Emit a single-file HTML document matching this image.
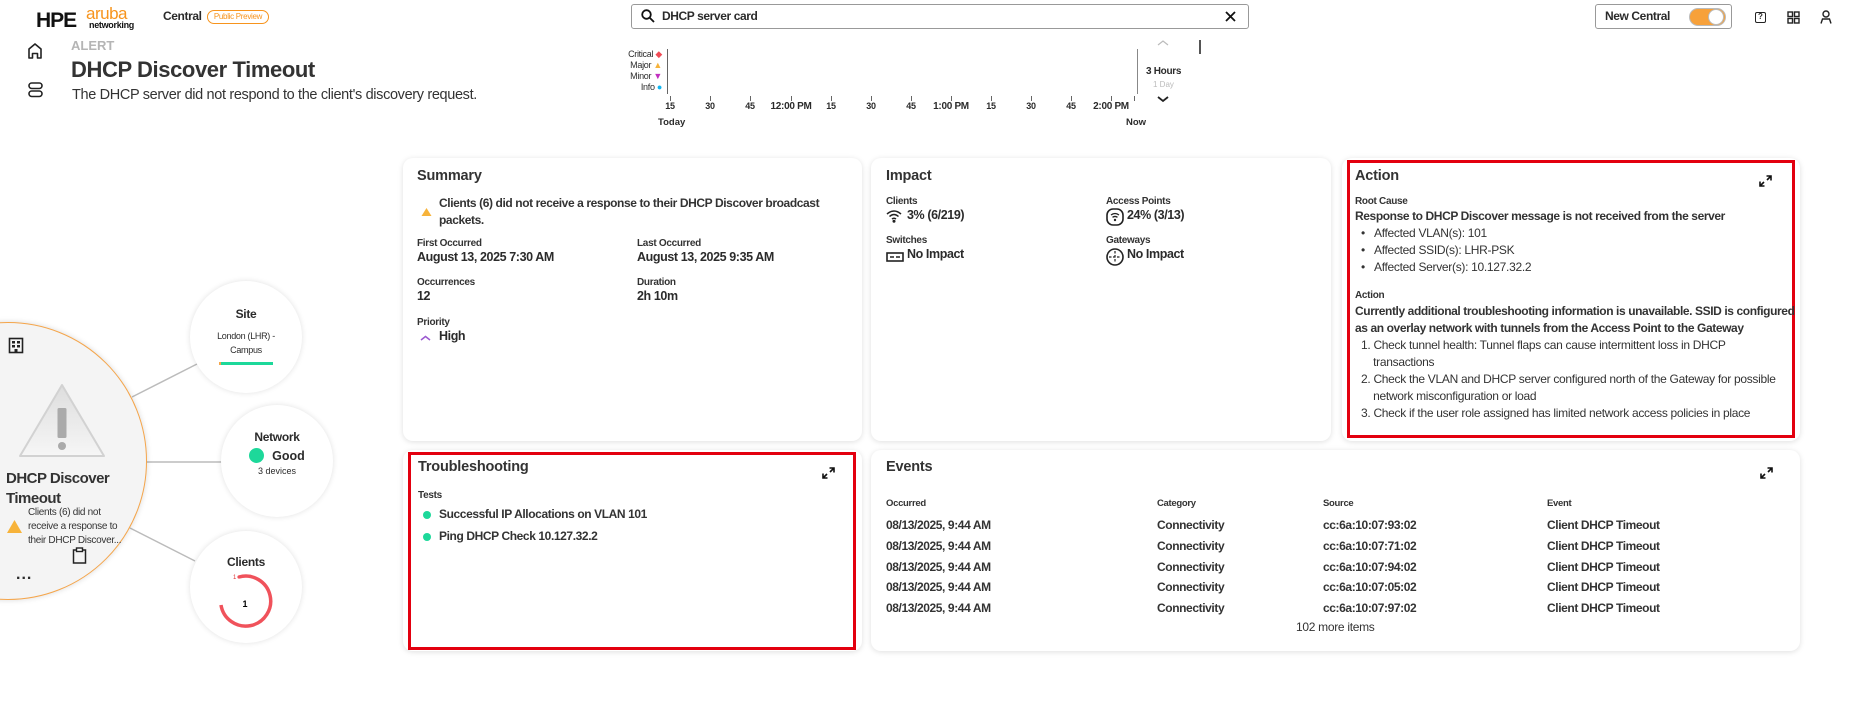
<!DOCTYPE html>
<html><head><meta charset="utf-8"><style>
*{box-sizing:border-box;margin:0;padding:0}
body{width:1868px;height:714px;background:#fff;font-family:"Liberation Sans",sans-serif;color:#2b2b2b;position:relative;overflow:hidden}
.a{position:absolute;white-space:nowrap}
.card{position:absolute;background:#fff;border-radius:10px;box-shadow:0 1px 6px rgba(0,0,0,.13)}
.red{position:absolute;border:3px solid #e3000f}
.ttl{position:absolute;font-weight:bold;font-size:14.5px;color:#333;letter-spacing:-0.2px}
.lbl{font-size:10px;color:#333;font-weight:bold;letter-spacing:-0.3px}
.val{font-size:12.5px;font-weight:bold;color:#2b2b2b;letter-spacing:-0.4px}
.t{font-size:12px;font-weight:bold;color:#333;letter-spacing:-0.4px}
.n{font-size:12px;color:#333;letter-spacing:-0.3px}
.circ{position:absolute;border-radius:50%;background:#fff;box-shadow:0 0 6px rgba(0,0,0,.12);text-align:center}
.tick{position:absolute;width:1px;height:5px;background:#666;top:96px}
.tl{position:absolute;top:101px;font-size:9px;font-weight:bold;transform:translateX(-50%);letter-spacing:-0.3px}
</style></head><body>
<!-- header -->
<div class="a" style="left:36px;top:9px;font-weight:900;font-size:21px;letter-spacing:-1px;color:#111">HPE</div>
<div class="a" style="left:86px;top:4px;font-size:17px;color:#f7941d;letter-spacing:-0.5px">aruba</div>
<div class="a" style="left:89px;top:20px;font-size:9px;color:#111;font-weight:bold;letter-spacing:-0.3px">networking</div>
<div class="a" style="left:163px;top:9px;font-size:12px;font-weight:bold;letter-spacing:-0.4px">Central</div>
<div class="a" style="left:207px;top:10px;width:62px;height:14px;border:1px solid #f7941d;border-radius:8px;font-size:8px;color:#f7941d;text-align:center;line-height:12px;letter-spacing:-0.3px">Public Preview</div>

<div class="a" style="left:631px;top:4px;width:618px;height:25px;border:1px solid #999;border-radius:3px"></div>
<svg class="a" style="left:641px;top:9px" width="14" height="14" viewBox="0 0 14 14"><circle cx="5.5" cy="5.5" r="4.3" fill="none" stroke="#111" stroke-width="1.8"/><path d="M8.7 8.7L13 13" stroke="#111" stroke-width="1.8"/></svg>
<div class="a" style="left:662px;top:9px;font-size:12px;font-weight:bold;letter-spacing:-0.4px">DHCP server card</div>
<svg class="a" style="left:1225px;top:11px" width="11" height="11"><path d="M1 1L10 10M10 1L1 10" stroke="#111" stroke-width="1.8"/></svg>

<div class="a" style="left:1595px;top:4px;width:137px;height:25px;border:1px solid #999;border-radius:3px"></div>
<div class="a" style="left:1605px;top:9px;font-size:12px;font-weight:bold;letter-spacing:-0.4px">New Central</div>
<div class="a" style="left:1689px;top:8px;width:37px;height:18px;border-radius:9px;background:#f7a13a;border:1px solid #bbb"></div>
<div class="a" style="left:1708px;top:9px;width:16px;height:16px;border-radius:50%;background:#fff;border:1px solid #bbb"></div>
<div class="a" style="left:1755px;top:12px;width:11px;height:11px;border:1.5px solid #222;border-radius:2px;font-size:8px;line-height:8px;text-align:center;font-weight:bold">?</div>
<svg class="a" style="left:1787px;top:11px" width="13" height="13"><rect x="1" y="1" width="4.5" height="4.5" fill="none" stroke="#222" stroke-width="1.4"/><rect x="7.5" y="1" width="4.5" height="4.5" fill="none" stroke="#222" stroke-width="1.4"/><rect x="1" y="7.5" width="4.5" height="4.5" fill="none" stroke="#222" stroke-width="1.4"/><rect x="7.5" y="7.5" width="4.5" height="4.5" fill="none" stroke="#222" stroke-width="1.4"/></svg>
<svg class="a" style="left:1820px;top:10px" width="12" height="14"><circle cx="6" cy="4" r="3" fill="none" stroke="#222" stroke-width="1.4"/><path d="M1 13.5L2.5 9H9.5L11 13.5" fill="none" stroke="#222" stroke-width="1.4"/></svg>

<!-- left nav -->
<svg class="a" style="left:27px;top:42px" width="16" height="17"><path d="M2 16V7L8 2L14 7V16H10.5V11.5H5.5V16Z" fill="none" stroke="#222" stroke-width="1.6" stroke-linejoin="round"/></svg>
<svg class="a" style="left:28px;top:82px" width="15" height="16"><rect x="1" y="1" width="13" height="5.5" rx="2.7" fill="none" stroke="#222" stroke-width="1.6"/><rect x="1" y="9" width="13" height="5.5" rx="2.7" fill="none" stroke="#222" stroke-width="1.6"/></svg>

<div class="a" style="left:71px;top:38px;font-size:13px;font-weight:bold;color:#b5b5b5">ALERT</div>
<div class="a" style="left:71px;top:57px;font-size:22px;font-weight:bold;color:#333;letter-spacing:-0.4px">DHCP Discover Timeout</div>
<div class="a" style="left:72px;top:87px;font-size:14.5px;color:#333;letter-spacing:-0.35px">The DHCP server did not respond to the client's discovery request.</div>

<!-- timeline -->
<div class="a" style="left:612px;top:49px;font-size:9px;line-height:11px;text-align:right;width:50px;letter-spacing:-0.3px">Critical <span style="color:#f04b55">◆</span><br>Major <span style="color:#f7b33a">▲</span><br>Minor <span style="color:#c12fbf">▼</span><br>Info <span style="color:#11b5f0">●</span></div>
<div class="a" style="left:667px;top:49px;width:1px;height:45px;background:#666"></div>
<div class="a" style="left:1137px;top:49px;width:1px;height:45px;background:#888"></div>
<div class="tick" style="left:670px"></div><div class="tl" style="left:670px">15</div>
<div class="tick" style="left:710px"></div><div class="tl" style="left:710px">30</div>
<div class="tick" style="left:750px"></div><div class="tl" style="left:750px">45</div>
<div class="tick" style="left:791px"></div><div class="tl" style="left:791px;font-size:10px">12:00 PM</div>
<div class="tick" style="left:831px"></div><div class="tl" style="left:831px">15</div>
<div class="tick" style="left:871px"></div><div class="tl" style="left:871px">30</div>
<div class="tick" style="left:911px"></div><div class="tl" style="left:911px">45</div>
<div class="tick" style="left:951px"></div><div class="tl" style="left:951px;font-size:10px">1:00 PM</div>
<div class="tick" style="left:991px"></div><div class="tl" style="left:991px">15</div>
<div class="tick" style="left:1031px"></div><div class="tl" style="left:1031px">30</div>
<div class="tick" style="left:1071px"></div><div class="tl" style="left:1071px">45</div>
<div class="tick" style="left:1111px"></div><div class="tl" style="left:1111px;font-size:10px">2:00 PM</div>
<div class="tick" style="left:1134px"></div>
<div class="a" style="left:658px;top:117px;font-size:9.5px;font-weight:bold">Today</div>
<div class="a" style="left:1126px;top:117px;font-size:9.5px;font-weight:bold">Now</div>
<svg class="a" style="left:1157px;top:39px" width="12" height="8"><path d="M1 6L6 2L11 6" fill="none" stroke="#bbb" stroke-width="1.2"/></svg>
<div class="a" style="left:1146px;top:66px;font-size:10px;font-weight:bold;letter-spacing:-0.3px">3 Hours</div>
<div class="a" style="left:1153px;top:80px;font-size:8px;color:#bbb">1 Day</div>
<svg class="a" style="left:1157px;top:95px" width="12" height="8"><path d="M1 2L6 6L11 2" fill="none" stroke="#222" stroke-width="1.8"/></svg>
<div class="a" style="left:1199px;top:40px;width:2px;height:14px;background:#555"></div>

<!-- left graph -->
<svg class="a" style="left:0;top:300px" width="340" height="330">
<line x1="132" y1="97" x2="197" y2="64" stroke="#bbb" stroke-width="1.5"/>
<line x1="147" y1="162" x2="222" y2="162" stroke="#bbb" stroke-width="1.5"/>
<line x1="130" y1="228" x2="195" y2="261" stroke="#bbb" stroke-width="1.5"/>
</svg>
<div class="a" style="left:-131px;top:322px;width:278px;height:278px;border-radius:50%;background:#f4f4f4;border:1.5px solid #f5a54a;box-shadow:0 0 6px rgba(0,0,0,.15)"></div>
<svg class="a" style="left:8px;top:337px" width="16" height="17"><rect x="1.5" y="1.5" width="13" height="14" fill="none" stroke="#222" stroke-width="1.6"/><rect x="4" y="4" width="3" height="2.5" fill="#222"/><rect x="9" y="4" width="3" height="2.5" fill="#222"/><rect x="4" y="8" width="3" height="2.5" fill="#222"/><rect x="9" y="8" width="3" height="2.5" fill="#222"/><rect x="6.5" y="12" width="3" height="3.5" fill="#222"/></svg>
<svg class="a" style="left:17px;top:382px" width="90" height="78"><defs><linearGradient id="g" x1="0" y1="0" x2="0" y2="1"><stop offset="0" stop-color="#ddd"/><stop offset="1" stop-color="#f6f6f6"/></linearGradient></defs><path d="M45 3L87 74H3Z" fill="url(#g)" stroke="#d2d2d2" stroke-width="2" stroke-linejoin="round"/><rect x="40.5" y="26" width="9" height="30" rx="1.5" fill="#aaa"/><circle cx="45" cy="64" r="4" fill="#aaa"/></svg>
<div class="a" style="left:6px;top:469px;font-size:15px;font-weight:bold;line-height:20px;color:#333;letter-spacing:-0.5px">DHCP Discover<br>Timeout</div>
<svg class="a" style="left:6px;top:519px" width="17" height="15"><path d="M8.5 1L16 14H1Z" fill="#f7b33a"/></svg>
<div class="a" style="left:28px;top:506px;font-size:10px;line-height:14px;color:#333;letter-spacing:-0.3px">Clients (6) did not<br>receive a response to<br>their DHCP Discover...</div>
<svg class="a" style="left:72px;top:547px" width="15" height="17"><rect x="1.5" y="3" width="12" height="13" fill="none" stroke="#222" stroke-width="1.5"/><rect x="4.5" y="1" width="6" height="3.5" fill="#fff" stroke="#222" stroke-width="1.4"/></svg>
<div class="a" style="left:16px;top:566px;font-size:16px;font-weight:bold;letter-spacing:1px">...</div>

<div class="circ" style="left:190px;top:281px;width:112px;height:112px">
<div style="margin-top:26px;font-size:12px;font-weight:bold;letter-spacing:-0.3px">Site</div>
<div style="margin-top:8px;font-size:9px;line-height:14px;letter-spacing:-0.3px">London (LHR) -<br>Campus</div>
<div style="margin:5px auto 0;width:54px;height:3px;background:#1dd89a;border-left:2px solid #f5a54a"></div>
</div>
<div class="circ" style="left:221px;top:405px;width:112px;height:112px">
<div style="margin-top:25px;font-size:12px;font-weight:bold;letter-spacing:-0.3px">Network</div>
<div style="margin-top:4px;font-size:12.5px;font-weight:bold"><span style="display:inline-block;width:15px;height:15px;border-radius:50%;background:#1dd89a;vertical-align:-3px;margin-right:8px"></span>Good</div>
<div style="margin-top:3px;font-size:9px">3 devices</div>
</div>
<div class="circ" style="left:190px;top:531px;width:112px;height:112px">
<div style="margin-top:24px;font-size:12px;font-weight:bold;letter-spacing:-0.3px">Clients</div>
</div>
<svg class="a" style="left:215px;top:572px" width="60" height="60"><path d="M24 5A25 25 0 1 1 6 33" fill="none" stroke="#f0525b" stroke-width="3.5"/><text x="30" y="35" font-size="9" font-weight="bold" text-anchor="middle" font-family="Liberation Sans">1</text><text x="18" y="7" font-size="6" fill="#d33" font-family="Liberation Sans">1</text><circle cx="24" cy="5" r="1.6" fill="#f0525b"/></svg>

<!-- Summary -->
<div class="card" style="left:403px;top:158px;width:459px;height:283px"></div>
<div class="ttl" style="left:417px;top:168px">Summary</div>
<svg class="a" style="left:421px;top:207px" width="11" height="10"><path d="M5.5 1L10.5 9H.5Z" fill="#f7b33a"/></svg>
<div class="a t" style="left:439px;top:195px;line-height:17px">Clients (6) did not receive a response to their DHCP Discover broadcast<br>packets.</div>
<div class="a lbl" style="left:417px;top:238px">First Occurred</div>
<div class="a val" style="left:417px;top:250px">August 13, 2025 7:30 AM</div>
<div class="a lbl" style="left:637px;top:238px">Last Occurred</div>
<div class="a val" style="left:637px;top:250px">August 13, 2025 9:35 AM</div>
<div class="a lbl" style="left:417px;top:277px">Occurrences</div>
<div class="a val" style="left:417px;top:289px">12</div>
<div class="a lbl" style="left:637px;top:277px">Duration</div>
<div class="a val" style="left:637px;top:289px">2h 10m</div>
<div class="a lbl" style="left:417px;top:317px">Priority</div>
<svg class="a" style="left:420px;top:335px" width="11" height="6"><path d="M1 5L5.5 1.5L10 5" fill="none" stroke="#9b59d0" stroke-width="1.5"/></svg>
<div class="a val" style="left:439px;top:329px">High</div>

<!-- Impact -->
<div class="card" style="left:871px;top:158px;width:460px;height:283px"></div>
<div class="ttl" style="left:886px;top:168px">Impact</div>
<div class="a lbl" style="left:886px;top:196px">Clients</div>
<svg class="a" style="left:886px;top:209px" width="16" height="14"><path d="M1 5Q8 -1 15 5M3.5 7.5Q8 3.5 12.5 7.5M6 10Q8 8.5 10 10" fill="none" stroke="#222" stroke-width="1.5"/><circle cx="8" cy="12.3" r="1.5" fill="#222"/></svg>
<div class="a val" style="left:907px;top:208px">3% (6/219)</div>
<div class="a lbl" style="left:1106px;top:196px">Access Points</div>
<svg class="a" style="left:1106px;top:208px" width="18" height="18"><rect x="1" y="1" width="16" height="16" rx="6" fill="none" stroke="#222" stroke-width="1.6"/><path d="M5 7Q9 4 13 7M6.5 9.3Q9 7.5 11.5 9.3" fill="none" stroke="#222" stroke-width="1.3"/><circle cx="9" cy="12" r="1.2" fill="#222"/></svg>
<div class="a val" style="left:1127px;top:208px">24% (3/13)</div>
<div class="a lbl" style="left:886px;top:235px">Switches</div>
<svg class="a" style="left:886px;top:252px" width="18" height="10"><rect x="1" y="1" width="16" height="8" fill="none" stroke="#222" stroke-width="1.6"/><path d="M4 5H8M10 5H14" stroke="#222" stroke-width="1.4"/></svg>
<div class="a val" style="left:907px;top:247px">No Impact</div>
<div class="a lbl" style="left:1106px;top:235px">Gateways</div>
<svg class="a" style="left:1106px;top:248px" width="18" height="18"><circle cx="9" cy="9" r="8" fill="none" stroke="#222" stroke-width="1.6"/><path d="M9 3V15M3 9H15" stroke="#222" stroke-width="1.2" stroke-dasharray="2.5 1.5"/></svg>
<div class="a val" style="left:1127px;top:247px">No Impact</div>

<!-- Action -->
<div class="card" style="left:1342px;top:158px;width:458px;height:283px"></div>
<div class="red" style="left:1347px;top:160px;width:448px;height:278px"></div>
<div class="ttl" style="left:1355px;top:168px">Action</div>
<svg class="a" style="left:1759px;top:175px" width="13" height="12"><path d="M7.5 1H12V5.5M12 1L8 5M5.5 11H1V6.5M1 11L5 7" fill="none" stroke="#111" stroke-width="1.6"/></svg>
<div class="a lbl" style="left:1355px;top:196px">Root Cause</div>
<div class="a t" style="left:1355px;top:209px">Response to DHCP Discover message is not received from the server</div>
<div class="a n" style="left:1361px;top:225px;line-height:17px">•&nbsp;&nbsp;&nbsp;Affected VLAN(s): 101<br>•&nbsp;&nbsp;&nbsp;Affected SSID(s): LHR-PSK<br>•&nbsp;&nbsp;&nbsp;Affected Server(s): 10.127.32.2</div>
<div class="a lbl" style="left:1355px;top:290px">Action</div>
<div class="a t" style="left:1355px;top:303px;line-height:17px">Currently additional troubleshooting information is unavailable. SSID is configured<br>as an overlay network with tunnels from the Access Point to the Gateway</div>
<div class="a n" style="left:1361px;top:337px;line-height:17px">1. Check tunnel health: Tunnel flaps can cause intermittent loss in DHCP<br>&nbsp;&nbsp;&nbsp;&nbsp;transactions<br>2. Check the VLAN and DHCP server configured north of the Gateway for possible<br>&nbsp;&nbsp;&nbsp;&nbsp;network misconfiguration or load<br>3. Check if the user role assigned has limited network access policies in place</div>

<!-- Troubleshooting -->
<div class="card" style="left:403px;top:450px;width:459px;height:201px"></div>
<div class="red" style="left:408px;top:452px;width:448px;height:198px"></div>
<div class="ttl" style="left:418px;top:459px">Troubleshooting</div>
<svg class="a" style="left:822px;top:467px" width="13" height="12"><path d="M7.5 1H12V5.5M12 1L8 5M5.5 11H1V6.5M1 11L5 7" fill="none" stroke="#111" stroke-width="1.6"/></svg>
<div class="a lbl" style="left:418px;top:490px">Tests</div>
<div class="a" style="left:423px;top:511px;width:8px;height:8px;border-radius:50%;background:#1dd89a"></div>
<div class="a t" style="left:439px;top:507px">Successful IP Allocations on VLAN 101</div>
<div class="a" style="left:423px;top:533px;width:8px;height:8px;border-radius:50%;background:#1dd89a"></div>
<div class="a t" style="left:439px;top:529px">Ping DHCP Check 10.127.32.2</div>

<!-- Events -->
<div class="card" style="left:871px;top:450px;width:929px;height:201px"></div>
<div class="ttl" style="left:886px;top:459px">Events</div>
<svg class="a" style="left:1760px;top:467px" width="13" height="12"><path d="M7.5 1H12V5.5M12 1L8 5M5.5 11H1V6.5M1 11L5 7" fill="none" stroke="#111" stroke-width="1.6"/></svg>
<div class="a lbl" style="left:886px;top:498px;font-size:9.5px">Occurred</div>
<div class="a lbl" style="left:1157px;top:498px;font-size:9.5px">Category</div>
<div class="a lbl" style="left:1323px;top:498px;font-size:9.5px">Source</div>
<div class="a lbl" style="left:1547px;top:498px;font-size:9.5px">Event</div>
<div class="a t" style="left:886px;top:515px;line-height:20.8px">08/13/2025, 9:44 AM<br>08/13/2025, 9:44 AM<br>08/13/2025, 9:44 AM<br>08/13/2025, 9:44 AM<br>08/13/2025, 9:44 AM</div>
<div class="a t" style="left:1157px;top:515px;line-height:20.8px">Connectivity<br>Connectivity<br>Connectivity<br>Connectivity<br>Connectivity</div>
<div class="a t" style="left:1323px;top:515px;line-height:20.8px">cc:6a:10:07:93:02<br>cc:6a:10:07:71:02<br>cc:6a:10:07:94:02<br>cc:6a:10:07:05:02<br>cc:6a:10:07:97:02</div>
<div class="a t" style="left:1547px;top:515px;line-height:20.8px">Client DHCP Timeout<br>Client DHCP Timeout<br>Client DHCP Timeout<br>Client DHCP Timeout<br>Client DHCP Timeout</div>
<div class="a n" style="left:1296px;top:620px">102 more items</div>
</body></html>
